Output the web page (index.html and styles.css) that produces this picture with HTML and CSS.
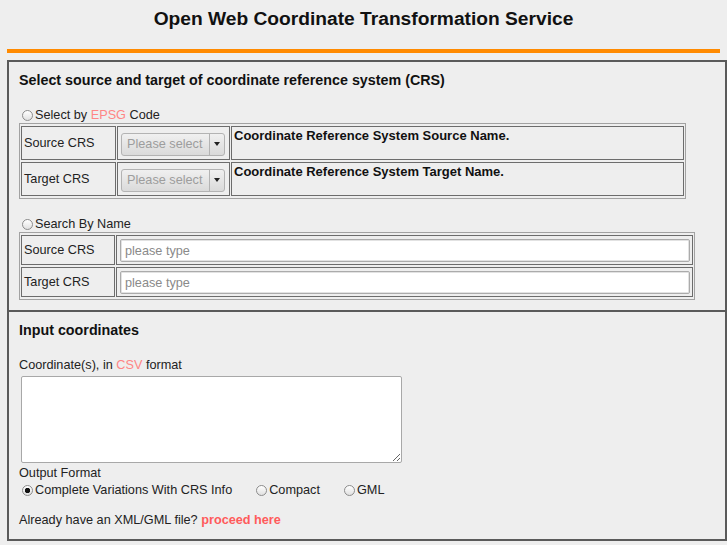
FILE: index.html
```html
<!DOCTYPE html>
<html lang="en">
<head>
  <meta charset="UTF-8" />
  <title>Open Web Coordinate Transformation Service</title>
  <link rel="stylesheet" href="styles.css">
</head>
<body>
  <h1 class="title">Open Web Coordinate Transformation Service</h1>
  <div class="rule"></div>

  <form class="panel">
    <section class="block">
      <h2>Select source and target of coordinate reference system (CRS)</h2>

      <label class="choice"><input type="radio" class="radio" name="mode">Select by&nbsp;<span class="hl">EPSG</span>&nbsp;Code</label>
      <table class="grid grid-epsg">
        <tr>
          <td class="lbl">Source CRS</td>
          <td class="ctl">
            <span class="select"><span class="select-text">Please select</span><span class="select-arrow"></span></span>
          </td>
          <td class="name">Coordinate Reference System Source Name.</td>
        </tr>
        <tr>
          <td class="lbl">Target CRS</td>
          <td class="ctl">
            <span class="select"><span class="select-text">Please select</span><span class="select-arrow"></span></span>
          </td>
          <td class="name">Coordinate Reference System Target Name.</td>
        </tr>
      </table>

      <label class="choice choice-name"><input type="radio" class="radio" name="mode">Search By Name</label>
      <table class="grid grid-name">
        <tr>
          <td class="lbl">Source CRS</td>
          <td class="ctl"><input type="text" class="text-input" placeholder="please type"></td>
        </tr>
        <tr>
          <td class="lbl">Target CRS</td>
          <td class="ctl"><input type="text" class="text-input" placeholder="please type"></td>
        </tr>
      </table>
    </section>

    <section class="block block-input">
      <h2>Input coordinates</h2>
      <div class="field-label">Coordinate(s), in <span class="hl">CSV</span> format</div>
      <textarea class="coords"></textarea>
      <div class="field-label field-output">Output Format</div>
      <div class="formats">
        <label class="choice"><input type="radio" class="radio" name="format" checked>Complete Variations With CRS Info</label>
        <label class="choice"><input type="radio" class="radio" name="format">Compact</label>
        <label class="choice"><input type="radio" class="radio" name="format">GML</label>
      </div>
      <p class="upload">Already have an XML/GML file? <a href="#" class="proceed">proceed here</a></p>
    </section>
  </form>
</body>
</html>
```

FILE: styles.css
```css
* { box-sizing: border-box; }
body {
  margin: 0;
  padding: 0;
  background: #eeeeee;
  color: #222;
  font-family: "Liberation Sans", Arial, sans-serif;
  font-size: 12.7px;
  line-height: 15px;
}
.title {
  margin: 0;
  padding-top: 8px;
  text-align: center;
  font-size: 19.2px;
  line-height: 22px;
  font-weight: bold;
  color: #111;
}
.rule {
  width: 713px;
  height: 4px;
  margin: 19px 0 0 7px;
  background: #ff8a00;
}
.panel {
  width: 720px;
  margin: 7px 0 0 7px;
  border: 2px solid #5a5a5a;
}
.block {
  padding: 10px 10px 10px;
}
.block-input {
  border-top: 2px solid #5a5a5a;
  padding-bottom: 11px;
}
.block h2 {
  margin: 0;
  font-size: 14.3px;
  line-height: 17px;
  font-weight: bold;
  color: #111;
}
.hl {
  color: #ff8585;
}
.choice {
  display: flex;
  align-items: center;
  height: 15px;
  white-space: nowrap;
}
.block > .choice {
  margin-top: 19px;
}
.block > .choice-name {
  margin-top: 18px;
}
.radio {
  appearance: none;
  -webkit-appearance: none;
  width: 11px;
  height: 11px;
  margin: 0 2px 0 3px;
  border: 1px solid #8c8c8c;
  border-radius: 50%;
  background: linear-gradient(#ffffff, #e0e0e0);
}
.radio:checked {
  background: radial-gradient(circle, #111 0 2.4px, transparent 3px), linear-gradient(#ffffff, #e0e0e0);
}
.grid {
  border: 1px solid #a2a2a2;
  border-spacing: 1px 2px;
}
.grid td {
  border: 1px solid #6c6c6c;
  padding: 0;
}
.grid-epsg {
  width: 667px;
}
.grid-name {
  width: 676px;
}
.grid .lbl {
  width: 95px;
  padding-left: 2px;
}
.grid-epsg td {
  height: 34px;
}
.grid .ctl {
  padding: 3px 2px 2px 3px;
}
.grid-epsg .ctl {
  width: 113px;
  padding-top: 4px;
}
.grid .name {
  vertical-align: top;
  padding: 1px 2px;
  font-weight: bold;
  font-size: 13px;
  color: #111;
}
.select {
  display: flex;
  width: 104px;
  height: 23px;
  border: 1px solid #b3b3b3;
  border-radius: 3px;
  background: linear-gradient(#f0f0f0, #dadada);
  color: #9d9d9d;
}
.select-text {
  flex: 1;
  padding-left: 5px;
  line-height: 21px;
}
.select-arrow {
  width: 15px;
  border-left: 1px solid #b3b3b3;
  display: flex;
  align-items: center;
  justify-content: center;
}
.select-arrow::after {
  content: "";
  border-top: 4px solid #222;
  border-left: 3.5px solid transparent;
  border-right: 3.5px solid transparent;
}
.text-input {
  display: block;
  width: 570px;
  height: 23px;
  padding: 0 4px;
  border: 1px solid #ababab;
  border-radius: 2px;
  box-shadow: inset 0 0 0 1px #e2e2e2;
  background: #fff;
  font: inherit;
  color: #222;
}
.text-input::placeholder {
  color: #8a8a8a;
}
.field-label {
  margin-top: 19px;
}
.coords {
  display: block;
  width: 381px;
  height: 87px;
  margin: 3px 0 0 2px;
  border: 1px solid #a8a8a8;
  border-radius: 2px;
  background: #fff;
  resize: both;
}
.field-output {
  margin-top: 3px;
}
.formats {
  display: flex;
  gap: 21px;
  margin-top: 2px;
}
.upload {
  margin: 15px 0 0;
}
.proceed {
  color: #ff5b5b;
  font-weight: bold;
  text-decoration: none;
}
```
